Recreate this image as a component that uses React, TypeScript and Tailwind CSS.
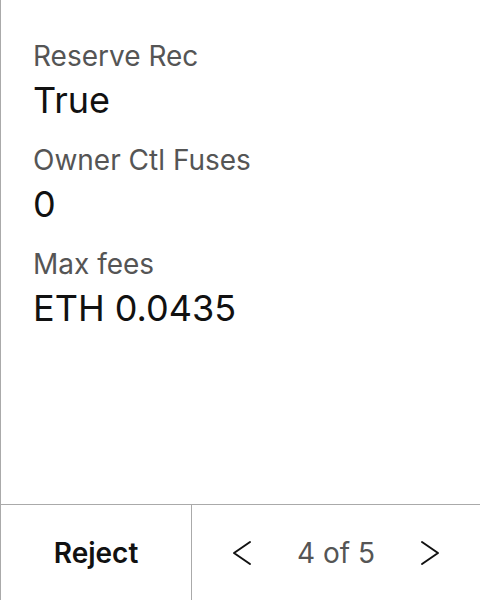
const fields = [
  { label: "Reserve Rec", value: "True" },
  { label: "Owner Ctl Fuses", value: "0" },
  { label: "Max fees", value: "ETH 0.0435" },
];

function Chevron({ dir }: { dir: "left" | "right" }) {
  return (
    <svg width="20" height="26" viewBox="0 0 20 26" fill="none" stroke="#111" strokeWidth="2" strokeLinecap="round" strokeLinejoin="round">
      {dir === "left" ? <polyline points="18,2 2,13 18,24" /> : <polyline points="2,2 18,13 2,24" />}
    </svg>
  );
}

export default function App() {
  return (
    <div className="flex h-[600px] w-[480px] flex-col border-l border-[#aaaaaa] bg-white font-['Inter',sans-serif]">
      <div className="flex flex-1 flex-col gap-6 pl-8 pt-[40px]">
        {fields.map((f) => (
          <div key={f.label} className="flex flex-col gap-2">
            <span className="text-[28px] leading-[32px] text-[#555555]">{f.label}</span>
            <span className="text-[36px] leading-[40px] text-[#111111]">{f.value}</span>
          </div>
        ))}
      </div>
      <div className="flex h-[96px] border-t border-[#aaaaaa]">
        <button className="flex w-[191px] items-center justify-center border-r border-[#aaaaaa] text-[28px] font-semibold text-[#111111]">
          Reject
        </button>
        <div className="flex flex-1 items-center justify-center gap-[45px]">
          <Chevron dir="left" />
          <span className="text-[28px] text-[#555555]">4 of 5</span>
          <Chevron dir="right" />
        </div>
      </div>
    </div>
  );
}
